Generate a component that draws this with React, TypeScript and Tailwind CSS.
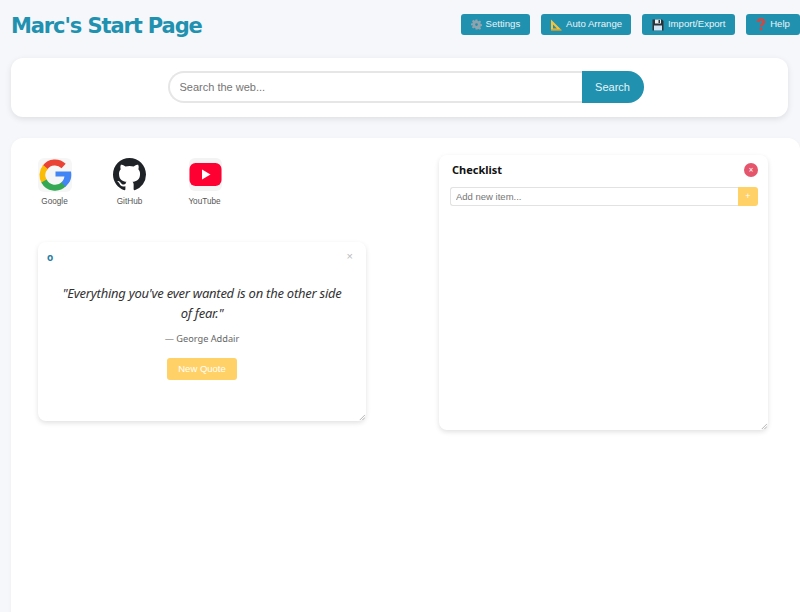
const sans = "font-['Liberation_Sans',Arial,sans-serif]"
const ui = "font-['Noto_Sans',sans-serif]"

function GearIcon() {
    return (
        <svg width="11" height="11" viewBox="0 0 24 24" className="shrink-0">
            <path fill="#8fa3ad" fillRule="evenodd" d="M10 1h4l.6 3.2 2 .8 2.7-1.8 2.8 2.8-1.8 2.7.8 2 3.200.6v4l-3.200.6-.8 2 1.800 2.700-2.800 2.800-2.700-1.800-2 .8L14 23h-4l-.6-3.200-2-.8-2.700 1.800-2.800-2.800 1.800-2.700-.8-2L0 14v-4l3.200-.6.8-2-1.800-2.700 2.800-2.800 2.700 1.800 2-.8zM12 9a3 3 0 100 6 3 3 0 000-6z" />
        </svg>
    )
}

function RulerIcon() {
    return (
        <svg width="12" height="12" viewBox="0 0 24 24" className="shrink-0">
            <path fill="#f5c33b" fillRule="evenodd" d="M2 1l21 21v1H2zM6 11v8h8z" />
            <path fill="#c98f1d" d="M2 21h21v2H2z" />
        </svg>
    )
}

function SaveIcon() {
    return (
        <svg width="12" height="12" viewBox="0 0 24 24" className="shrink-0">
            <path fill="#2b3338" d="M1 1h19l3 3v19H1z" />
            <path fill="#e8edf0" d="M6 1h12v8H6z" />
            <path fill="#2b3338" d="M13 2h3v6h-3z" />
            <path fill="#cfe3f5" d="M4 13h16v10H4z" />
        </svg>
    )
}

function QuestionIcon() {
    return (
        <svg width="10" height="13" viewBox="0 0 24 30" className="shrink-0">
            <path fill="none" stroke="#d8453e" strokeWidth="6" d="M5 9c0-8 14-8 14 0 0 5-7 5-7 11" />
            <circle cx="12" cy="26" r="3.500" fill="#d8453e" />
        </svg>
    )
}

function HeaderButton({ icon, label, width }: { icon: React.ReactNode; label: string; width: string }) {
    return (
        <button className={`${width} h-[21px] flex items-center justify-center gap-[4px] rounded-[3px] bg-[#2191b0] text-[9.6px] text-[#e8f4f7] ${sans}`}>
            {icon}
            {label}
        </button>
    )
}

function GoogleIcon() {
    return (
        <svg width="34" height="34" viewBox="0 0 34 34">
            <rect width="34" height="34" rx="6" fill="#f6f6f6" />
            <g fill="none" strokeWidth="6">
                <path stroke="#ea4335" d="M7 9.500A12.500 12.500 0 0 1 25.600 8" />
                <path stroke="#fbbc05" d="M7.500 9A12.500 12.500 0 0 0 6.500 24" />
                <path stroke="#34a853" d="M6 23A12.500 12.500 0 0 0 26 26" />
                <path stroke="#4285f4" d="M25.500 26.500A12.500 12.500 0 0 0 29.500 17" />
            </g>
            <path fill="#4285f4" d="M17.500 13.500h15.500c.2 1 .3 2.300.3 3.500 0 3.500-1 6.500-3 8.500l-4.500-3.500c1-1 1.500-2 1.800-3.500H17.500z" />
        </svg>
    )
}

function GithubIcon() {
    return (
        <svg width="33" height="33" viewBox="0 0 24 24">
            <path fill="#1f2328" d="M12 0C5.370 0 0 5.370 0 12c0 5.310 3.435 9.795 8.205 11.385.6.105.825-.255.825-.57 0-.285-.015-1.230-.015-2.235-3.015.555-3.795-.735-4.035-1.410-.135-.345-.72-1.410-1.230-1.695-.42-.225-1.020-.780-.015-.795.945-.015 1.620.870 1.845 1.230 1.080 1.815 2.805 1.305 3.495.990.105-.780.420-1.305.765-1.605-2.670-.300-5.460-1.335-5.460-5.925 0-1.305.465-2.385 1.230-3.225-.120-.300-.540-1.530.120-3.180 0 0 1.005-.315 3.300 1.230.960-.270 1.980-.405 3-.405s2.040.135 3 .405c2.295-1.560 3.300-1.230 3.300-1.230.660 1.650.240 2.880.120 3.180.765.840 1.230 1.905 1.230 3.225 0 4.605-2.805 5.625-5.475 5.925.435.375.810 1.095.810 2.220 0 1.605-.015 2.895-.015 3.300 0 .315.225.690.825.570A12.020 12.020 0 0024 12c0-6.630-5.370-12-12-12z" />
        </svg>
    )
}

function YoutubeIcon() {
    return (
        <svg width="33" height="33" viewBox="0 0 33 33" className="ml-[1px]">
            <rect x="0" y="0" width="33" height="33" rx="6" fill="#f3f3f3" />
            <rect x="0.500" y="5" width="32" height="23" rx="6" fill="#ff0033" />
            <path fill="#fff" d="M13 11.500v10l8.500-5z" />
        </svg>
    )
}

function Shortcut({ icon, label }: { icon: React.ReactNode; label: string }) {
    return (
        <div className="w-[75px] flex flex-col items-center">
            <div className="h-[33px] flex items-center">{icon}</div>
            <span className={`mt-[5px] text-[8.200px] leading-[12px] text-[#555] ${sans}`}>{label}</span>
        </div>
    )
}

function ResizeGrip() {
    return (
        <svg width="6" height="6" viewBox="0 0 7 7" className="absolute right-[1px] bottom-[1px]">
            <path stroke="#aaa" strokeWidth="1" d="M1 7l6-6M4 7l3-3" />
        </svg>
    )
}

export default function App() {
    return (
        <div className="relative h-[612px] w-[800px] overflow-hidden bg-[#f5f7fb]">
            <header className="h-[58px] pl-[11px] flex items-start justify-between">
                <h1 className="mt-[10px] text-[21px] leading-[32px] font-bold tracking-[-1.100px] text-[#2191b0] font-['DejaVu_Sans',sans-serif]">
                    Marc's Start Page
                </h1>
                <div className="mt-[14px] flex gap-[11px] w-[339px] shrink-0">
                    <HeaderButton icon={<GearIcon />} label="Settings" width="w-[69px]" />
                    <HeaderButton icon={<RulerIcon />} label="Auto Arrange" width="w-[91px]" />
                    <HeaderButton icon={<SaveIcon />} label="Import/Export" width="w-[93px]" />
                    <HeaderButton icon={<QuestionIcon />} label="Help" width="w-[54px] shrink-0" />
                </div>
            </header>

            <section className="ml-[11px] w-[777px] h-[59px] pl-[12px] pb-[1px] flex items-center justify-center rounded-[12px] bg-white shadow-[0_2px_6px_rgba(0,0,0,0.1)]">
                <div className="flex h-[32px]">
                    <input
                        placeholder="Search the web..."
                        className={`w-[414px] h-full pl-[10px] rounded-l-[16px] border-2 border-r-0 border-[#e6e6e6] bg-white text-[11px] outline-none placeholder:text-[#757575] ${sans}`}
                    />
                    <button className={`w-[62px] h-full rounded-r-[16px] bg-[#2191b0] text-[11px] text-[#e8f4f7] ${sans}`}>Search</button>
                </div>
            </section>

            <main className="relative mt-[21px] ml-[11px] h-[500px] w-[789px] rounded-[12px] bg-white shadow-[0_1px_4px_rgba(0,0,0,0.04)]">
                <div className="pt-[20px] pl-[6px] flex">
                    <Shortcut icon={<GoogleIcon />} label="Google" />
                    <Shortcut icon={<GithubIcon />} label="GitHub" />
                    <Shortcut icon={<YoutubeIcon />} label="YouTube" />
                </div>

                <div className="absolute left-[27px] top-[104px] w-[328px] h-[179px] rounded-[8px] bg-white shadow-[0_2px_5px_rgba(0,0,0,0.12)]">
                    <span className={`absolute left-[9px] top-[9px] text-[10px] leading-[12px] font-bold text-[#2b7ea1] ${ui}`}>o</span>
                    <span className={`absolute right-[13px] top-[7px] text-[11px] leading-[14px] text-[#bbb] ${sans}`}>×</span>
                    <div className="pt-[41px] px-[20px] flex flex-col items-center text-center">
                        <p className={`text-[13px] leading-[20px] italic tracking-[-0.250px] text-[#333] ${ui}`}>
                            "Everything you've ever wanted is on the other side of fear."
                        </p>
                        <span className={`mt-[9px] text-[9.200px] leading-[14px] text-[#666] ${ui}`}>— George Addair</span>
                        <button className={`mt-[12px] w-[70px] h-[22px] rounded-[3px] bg-[#ffd166] text-[9.500px] text-white ${sans}`}>New Quote</button>
                    </div>
                    <ResizeGrip />
                </div>

                <div className="absolute left-[428px] top-[17px] w-[329px] h-[275px] rounded-[8px] bg-white shadow-[0_2px_5px_rgba(0,0,0,0.12)] pl-[11px] pr-[10px]">
                    <div className="h-[32px] flex items-center justify-between pl-[2px] pt-[1px] pb-[3px]">
                        <span className={`text-[11px] font-bold text-[#111] ${ui}`}>Checklist</span>
                        <button className="w-[14px] h-[14px] rounded-full bg-[#e5566c] flex items-center justify-center text-[8px] leading-none text-white">×</button>
                    </div>
                    <div className="flex h-[19px]">
                        <input
                            placeholder="Add new item..."
                            className={`flex-1 min-w-0 h-full pl-[5px] rounded-l-[3px] border border-r-0 border-[#e2e2e2] text-[9.500px] outline-none placeholder:text-[#757575] ${sans}`}
                        />
                        <button className={`w-[20px] h-full rounded-r-[3px] bg-[#ffd166] text-[9px] text-white ${sans}`}>+</button>
                    </div>
                    <ResizeGrip />
                </div>
            </main>
        </div>
    )
}
